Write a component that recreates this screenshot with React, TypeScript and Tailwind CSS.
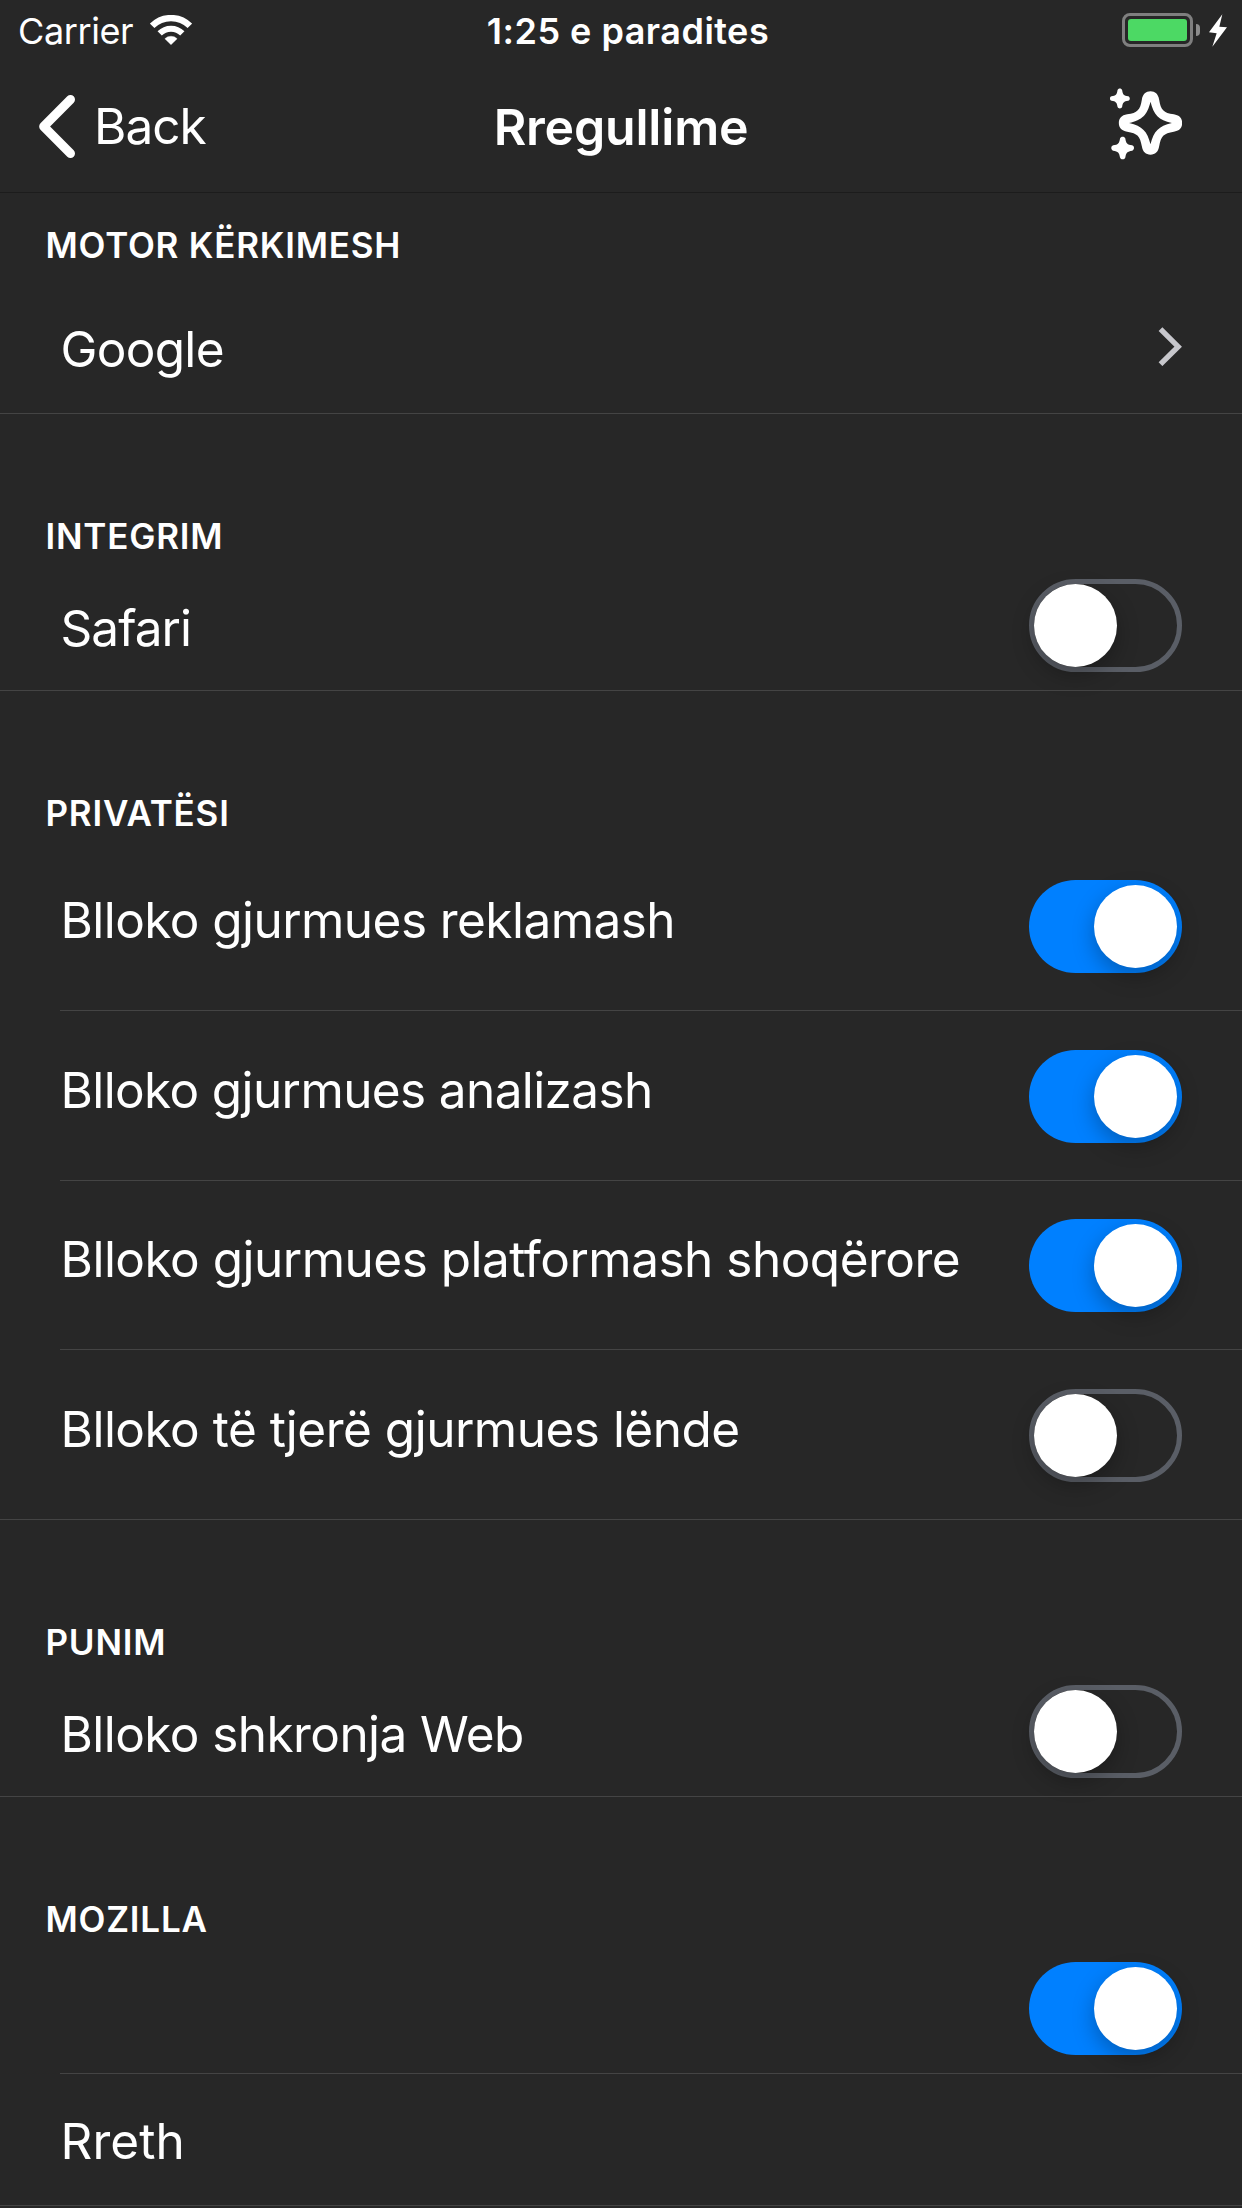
import type { ReactNode } from "react";

function WifiIcon() {
  return (
    <svg className="h-[31px] w-[42px]" viewBox="-63 -89 126 93" fill="none" stroke="white">
      <path d="M-56.5 -56.5A80 80 0 0 1 56.5 -56.5" strokeWidth="19" />
      <path d="M-34 -34A48 48 0 0 1 34 -34" strokeWidth="18" />
      <path d="M0 0L-18.5 -18A27 27 0 0 1 18.5 -18Z" fill="white" strokeWidth="1" />
    </svg>
  );
}

function Battery() {
  return (
    <div className="flex items-center">
      <div className="h-[34px] w-[71px] rounded-[8px] border-[3px] border-[#7f7f7f] p-[3px]">
        <div className="h-full w-full rounded-[3px] bg-[#4cd964]" />
      </div>
      <div className="ml-[3px] h-3 w-1 rounded-r-full bg-[#8c8c8c]" />
      <svg className="ml-[9px] h-[33px] w-[18px]" viewBox="387 42 54 99" fill="white">
        <path d="M427 43L387 97L410 100L397 140L441 82L418 80Z" />
      </svg>
    </div>
  );
}

function SparkleIcon() {
  const small =
    "M-7 -25C-5 -31.500 5 -31.500 7 -25C9 -12 12 -9 25 -7C31.500 -5 31.500 5 25 7C12 9 9 12 7 25C5 31.500 -5 31.500 -7 25C-9 12 -12 9 -25 7C-31.500 5 -31.500 -5 -25 -7C-12 -9 -9 -12 -7 -25Z";
  return (
    <svg className="h-[72px] w-[72px]" viewBox="90 265 216 216" fill="white">
      <path
        transform="translate(211.500 370)"
        fillRule="evenodd"
        d="M-26 -70C-23 -87 -14 -95 0 -95C14 -95 23 -87 26 -70C31 -39 39 -31 70 -26C87 -23 95 -14 95 0C95 14 87 23 70 26C39 31 31 39 26 70C23 87 14 95 0 95C-14 95 -23 87 -26 70C-31 39 -39 31 -70 26C-87 23 -95 14 -95 0C-95 -14 -87 -23 -70 -26C-39 -31 -31 -39 -26 -70Z M0 -64C10 -24 24 -10 64 0C24 10 10 24 0 64C-10 24 -24 10 -64 0C-24 -10 -10 -24 0 -64Z"
      />
      <path transform="translate(119.500 296.500)" d={small} />
      <path transform="translate(128 445) scale(1.140)" d={small} />
    </svg>
  );
}

function Toggle({ on }: { on: boolean }) {
  return (
    <div
      role="switch"
      aria-checked={on}
      className={
        on
          ? "flex h-[93px] w-[153px] justify-end rounded-full bg-[#0080ff] p-[5px]"
          : "flex h-[93px] w-[153px] rounded-full border-[5px] border-[#5a5e66]"
      }
    >
      <div className="size-[83px] rounded-full bg-white shadow-[0_8px_22px_rgba(0,0,0,0.28)]" />
    </div>
  );
}

function Header({ className, children }: { className: string; children: ReactNode }) {
  return (
    <h2 className={`pl-[45.5px] text-[35px] leading-[42px] font-semibold tracking-[0.78px] ${className}`}>
      {children}
    </h2>
  );
}

type RowProps = {
  label?: string;
  className: string;
  labelClass?: string;
  control?: ReactNode;
  controlClass?: string;
  last?: boolean;
};

function Row({ label, className, labelClass = "", control, controlClass = "", last }: RowProps) {
  return (
    <div className={`flex flex-col ${className}`}>
      <div className="flex min-h-0 flex-1 items-start justify-between pr-[60px] pl-[60.5px]">
        <span className={`text-[49.5px] leading-[60px] whitespace-nowrap ${labelClass}`}>{label}</span>
        <div className={controlClass}>{control}</div>
      </div>
      <div className={last ? "h-px shrink-0 bg-[#444444]" : "ml-[60px] h-px shrink-0 bg-[#444444]"} />
    </div>
  );
}

const trackers = [
  {
    label: "Blloko gjurmues reklamash",
    on: true,
    rowClass: "h-[170px]",
    labelClass: "mt-[49px] tracking-[-0.56px]",
    controlClass: "mt-[39px]",
  },
  {
    label: "Blloko gjurmues analizash",
    on: true,
    rowClass: "h-[170px]",
    labelClass: "mt-[49px] tracking-[-0.62px]",
    controlClass: "mt-[39px]",
  },
  {
    label: "Blloko gjurmues platformash shoqërore",
    on: true,
    rowClass: "h-[169px]",
    labelClass: "mt-[48px] tracking-[-0.5px]",
    controlClass: "mt-[38px]",
  },
  {
    label: "Blloko të tjerë gjurmues lënde",
    on: false,
    rowClass: "h-[170px]",
    labelClass: "mt-[49px] tracking-[-0.5px]",
    controlClass: "mt-[39px]",
  },
];

export default function App() {
  return (
    <div className="h-[2208px] w-[1242px] overflow-hidden bg-[#272727] font-[Inter,sans-serif] text-white">
      <div className="grid h-[60px] grid-cols-[1fr_auto_1fr] items-start pr-[15px] pl-[18px]">
        <div className="flex items-start gap-[17px]">
          <span className="mt-[9px] text-[36px] leading-[44px] tracking-[-0.4px]">Carrier</span>
          <div className="mt-[15px]">
            <WifiIcon />
          </div>
        </div>
        <span className="mt-[9px] mr-[-11px] text-[36px] leading-[44px] font-semibold tracking-[0.48px]">
          1:25 e paradites
        </span>
        <div className="mt-[13px] flex justify-end">
          <Battery />
        </div>
      </div>

      <nav className="grid h-[133px] grid-cols-[1fr_auto_1fr] items-start border-b border-[#1c1c1c] pr-[60px] pl-[38px]">
        <div className="flex items-start">
          <svg
            className="mt-[35px] h-[63px] w-[38px]"
            viewBox="114 285 114 189"
            fill="none"
            stroke="white"
            strokeWidth="27"
            strokeLinecap="round"
            strokeLinejoin="round"
          >
            <path d="M211.500 298.500L131 379.500L211.500 460.500" />
          </svg>
          <span className="mt-9 ml-[18px] text-[49.5px] leading-[60px] tracking-[-1px]">Back</span>
        </div>
        <h1 className="mt-[37px] ml-[22px] text-[50px] leading-[60px] font-semibold tracking-[-0.2px]">Rregullime</h1>
        <div className="mt-[28px] flex justify-end">
          <SparkleIcon />
        </div>
      </nav>

      <Header className="h-[107px] pt-[31px]">MOTOR KËRKIMESH</Header>
      <Row
        label="Google"
        className="h-[114px]"
        labelClass="mt-[19px] tracking-[-0.7px]"
        controlClass="mt-[27px]"
        last
        control={
          <svg className="h-[39px] w-6" viewBox="474 20 72 117" fill="none" stroke="#c7c7cc" strokeWidth="16">
            <path d="M481.500 26.500L534.500 79L481.500 131.500" />
          </svg>
        }
      />

      <Header className="h-[147px] pt-[101px]">INTEGRIM</Header>
      <Row
        label="Safari"
        className="h-[130px]"
        labelClass="mt-[37px] tracking-[-0.95px]"
        controlClass="mt-[18px]"
        last
        control={<Toggle on={false} />}
      />

      <Header className="h-[150px] pt-[101px]">PRIVATËSI</Header>
      {trackers.map((row, i) => (
        <Row
          key={row.label}
          label={row.label}
          className={row.rowClass}
          labelClass={row.labelClass}
          controlClass={row.controlClass}
          last={i === trackers.length - 1}
          control={<Toggle on={row.on} />}
        />
      ))}

      <Header className="h-[147px] pt-[101px]">PUNIM</Header>
      <Row
        label="Blloko shkronja Web"
        className="h-[130px]"
        labelClass="mt-[37px] tracking-[-0.57px]"
        controlClass="mt-[18px]"
        last
        control={<Toggle on={false} />}
      />

      <Header className="h-[147px] pt-[101px]">MOZILLA</Header>
      <Row className="h-[130px]" controlClass="mt-[18px]" control={<Toggle on />} />
      <Row label="Rreth" className="h-[132px]" labelClass="mt-[37px] tracking-[0.1px]" last />
    </div>
  );
}
